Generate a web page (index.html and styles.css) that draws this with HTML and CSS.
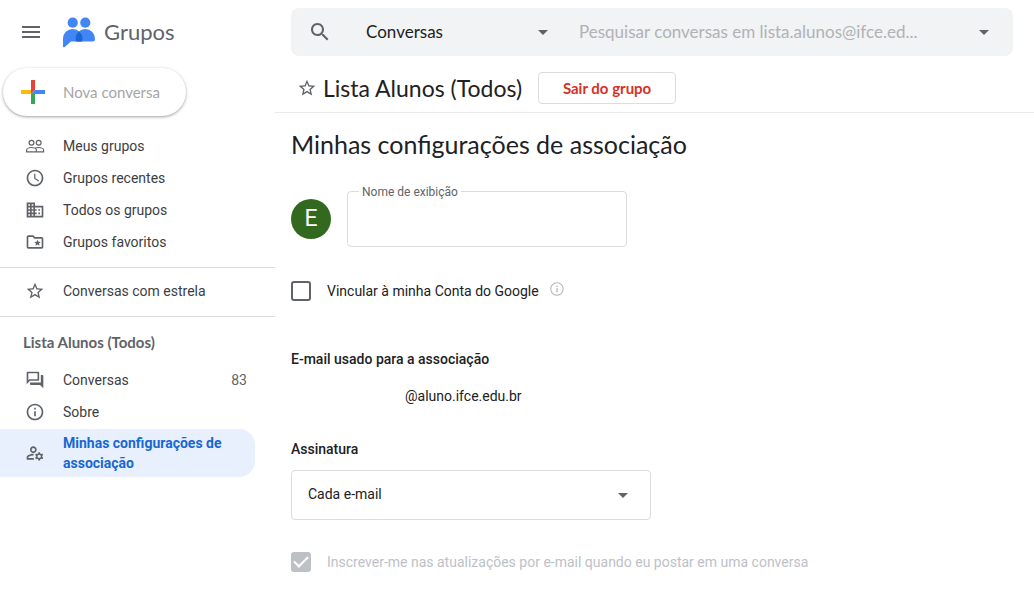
FILE: index.html
```html
<!DOCTYPE html>
<html lang="pt-BR">
<head>
    <meta charset="UTF-8">
    <meta name="viewport" content="width=device-width, initial-scale=1.0">
    <title>Grupos - Minhas configurações de associação</title>
    <link rel="stylesheet" href="styles.css">
</head>
<body>
    <div class="layout">
        <aside class="sidebar">
            <div class="brand">
                <button type="button" class="icon-btn" aria-label="Menu principal">
                    <svg class="icon-lg" viewBox="0 0 24 24"><path d="M3 18h18v-2H3v2zm0-5h18v-2H3v2zm0-7v2h18V6H3z"/></svg>
                </button>
                <a href="#" class="logo">
                    <svg class="logo-mark" viewBox="0 0 34 32">
                        <g fill="#4285f4">
                            <circle cx="10.7" cy="6.7" r="5.1"/>
                            <circle cx="23.3" cy="6.7" r="5.1"/>
                            <path d="M1 30V22.5a9.75 9.5 0 0 1 19.5 0V25.5H9L3 30.7Q1 32 1 30Z"/>
                            <path d="M13.7 25.5V22.5a9.6 9.5 0 0 1 19.2 0v1q0 2-2 2Z"/>
                        </g>
                        <path fill="#1967d2" d="M17 15.5Q20.5 18.5 20.5 22.5Q20.5 25.5 18.5 25.5H15.5Q13.7 25.5 13.7 22.5Q13.7 18.5 17 15.5Z"/>
                    </svg>
                    <span>Grupos</span>
                </a>
            </div>

            <button type="button" class="btn-new" disabled>
                <svg viewBox="0 0 24 24">
                    <path fill="#ea4335" d="M10 0h4v10l-4 4z"/>
                    <path fill="#4285f4" d="M14 10h10v4H10z"/>
                    <path fill="#34a853" d="M10 14h4v10h-4z"/>
                    <path fill="#fbbc04" d="M0 10h10v4H0z"/>
                </svg>
                Nova conversa
            </button>

            <nav>
                <ul class="nav-list">
                    <li><a href="#" class="nav-item">
                        <svg class="outline" viewBox="0 0 20 20"><circle cx="6.5" cy="6.8" r="2.4"/><circle cx="13.7" cy="6.8" r="2.4"/><path d="M1.600 15.900v-2c0-1.400 2.700-2.400 4.900-2.400s4.900 1 4.900 2.400v2zM10.200 12c1-.3 2.300-.5 3.500-.5 2.200 0 4.900 1 4.900 2.400v2h-7.200"/></svg>
                        <span>Meus grupos</span>
                    </a></li>
                    <li><a href="#" class="nav-item">
                        <svg viewBox="0 0 24 24"><path d="M11.99 2C6.47 2 2 6.48 2 12s4.47 10 9.99 10C17.52 22 22 17.52 22 12S17.52 2 11.99 2zM12 20c-4.42 0-8-3.58-8-8s3.58-8 8-8 8 3.58 8 8-3.58 8-8 8zm.5-13H11v6l5.25 3.15.75-1.23-4.5-2.67z"/></svg>
                        <span>Grupos recentes</span>
                    </a></li>
                    <li><a href="#" class="nav-item">
                        <svg viewBox="0 0 24 24"><path d="M12 7V3H2v18h20V7H12zM6 19H4v-2h2v2zm0-4H4v-2h2v2zm0-4H4V9h2v2zm0-4H4V5h2v2zm4 12H8v-2h2v2zm0-4H8v-2h2v2zm0-4H8V9h2v2zm0-4H8V5h2v2zm10 12h-8v-2h2v-2h-2v-2h2v-2h-2V9h8v10zm-2-8h-2v2h2v-2zm0 4h-2v2h2v-2z"/></svg>
                        <span>Todos os grupos</span>
                    </a></li>
                    <li><a href="#" class="nav-item">
                        <svg viewBox="0 0 24 24"><path d="M20 6h-8l-2-2H4c-1.1 0-2 .9-2 2v12c0 1.1.9 2 2 2h16c1.1 0 2-.9 2-2V8c0-1.1-.9-2-2-2zm0 12H4V6h5.17l2 2H20v10z"/><path d="M15 9.2l1.100 2.600 2.800.2-2.100 1.800.7 2.800-2.500-1.500-2.500 1.500.7-2.800-2.100-1.800 2.800-.2z"/></svg>
                        <span>Grupos favoritos</span>
                    </a></li>
                </ul>
                <ul class="nav-list divided">
                    <li><a href="#" class="nav-item">
                        <svg viewBox="0 0 24 24"><path d="M22 9.24l-7.19-.62L12 2 9.19 8.63 2 9.24l5.46 4.73L5.82 21 12 17.27 18.18 21l-1.63-7.03L22 9.24zM12 15.4l-3.76 2.27 1-4.28-3.32-2.88 4.38-.38L12 6.1l1.71 4.04 4.38.38-3.32 2.88 1 4.28L12 15.4z"/></svg>
                        <span>Conversas com estrela</span>
                    </a></li>
                </ul>
                <div class="divided">
                    <h2 class="nav-title">Lista Alunos (Todos)</h2>
                    <ul class="nav-list">
                        <li><a href="#" class="nav-item">
                            <svg viewBox="0 0 24 24"><path d="M15 4v7H5.17L4 12.17V4h11m1-2H3c-.55 0-1 .45-1 1v14l4-4h10c.55 0 1-.45 1-1V3c0-.55-.45-1-1-1zm5 4h-2v9H6v2c0 .55.45 1 1 1h11l4 4V7c0-.55-.45-1-1-1z"/></svg>
                            <span>Conversas</span>
                            <span class="count">83</span>
                        </a></li>
                        <li><a href="#" class="nav-item">
                            <svg viewBox="0 0 24 24"><path d="M11 7h2v2h-2zm0 4h2v6h-2zm1-9C6.48 2 2 6.48 2 12s4.48 10 10 10 10-4.48 10-10S17.52 2 12 2zm0 18c-4.41 0-8-3.59-8-8s3.59-8 8-8 8 3.59 8 8-3.59 8-8 8z"/></svg>
                            <span>Sobre</span>
                        </a></li>
                        <li><a href="#" class="nav-item active" aria-current="page">
                            <svg viewBox="0 0 24 24"><path d="M4 18v-.65c0-.34.16-.66.41-.81C6.1 15.53 8.03 15 10 15c.03 0 .05 0 .08.01.1-.7.3-1.37.59-1.98-.22-.02-.44-.03-.67-.03-2.42 0-4.68.67-6.61 1.82-.88.52-1.39 1.5-1.39 2.53V20h9.26c-.42-.6-.75-1.28-.97-2H4zM10 12c2.21 0 4-1.79 4-4s-1.79-4-4-4-4 1.79-4 4 1.79 4 4 4zm0-6c1.1 0 2 .9 2 2s-.9 2-2 2-2-.9-2-2 .9-2 2-2zM20.75 16c0-.22-.03-.42-.06-.63l1.14-1.01-1-1.73-1.45.49c-.32-.27-.68-.48-1.08-.63L18 11h-2l-.3 1.49c-.4.15-.76.36-1.08.63l-1.45-.49-1 1.73 1.14 1.01c-.03.21-.06.41-.06.63s.03.42.06.63l-1.14 1.01 1 1.73 1.45-.49c.32.27.68.48 1.08.63L16 21h2l.3-1.49c.4-.15.76-.36 1.08-.63l1.45.49 1-1.73-1.14-1.01c.03-.21.06-.41.06-.63zM17 18c-1.1 0-2-.9-2-2s.9-2 2-2 2 .9 2 2-.9 2-2 2z"/></svg>
                            <span>Minhas configurações de associação</span>
                        </a></li>
                    </ul>
                </div>
            </nav>
        </aside>

        <main>
            <form class="search" role="search">
                <button type="submit" class="icon-btn" aria-label="Pesquisar">
                    <svg class="icon-lg" viewBox="0 0 24 24"><path d="M15.5 14h-.79l-.28-.27C15.41 12.59 16 11.11 16 9.5 16 5.91 13.09 3 9.5 3S3 5.91 3 9.5 5.91 16 9.5 16c1.61 0 3.09-.59 4.23-1.57l.27.28v.79l5 4.99L20.49 19l-4.99-5zm-6 0C7.01 14 5 11.99 5 9.5S7.01 5 9.5 5 14 7.01 14 9.5 11.99 14 9.5 14z"/></svg>
                </button>
                <div class="select scope">
                    <select aria-label="Pesquisar em">
                        <option>Conversas</option>
                    </select>
                    <svg class="caret" viewBox="0 0 10 5"><path d="M0 0h10L5 5z"/></svg>
                </div>
                <input type="text" class="search-input" aria-label="Pesquisar conversas" placeholder="Pesquisar conversas em lista.alunos@ifce.ed...">
                <button type="button" class="icon-btn" aria-label="Opções de pesquisa">
                    <svg class="caret" viewBox="0 0 10 5"><path d="M0 0h10L5 5z"/></svg>
                </button>
            </form>

            <header class="group-header">
                <button type="button" class="star-btn" aria-label="Adicionar aos favoritos">
                    <svg viewBox="0 0 24 24"><path d="M22 9.24l-7.19-.62L12 2 9.19 8.63 2 9.24l5.46 4.73L5.82 21 12 17.27 18.18 21l-1.63-7.03L22 9.24zM12 15.4l-3.76 2.27 1-4.28-3.32-2.88 4.38-.38L12 6.1l1.71 4.04 4.38.38-3.32 2.88 1 4.28L12 15.4z"/></svg>
                </button>
                <h1>Lista Alunos (Todos)</h1>
                <button type="button" class="btn-leave">Sair do grupo</button>
            </header>

            <form class="settings">
                <h2>Minhas configurações de associação</h2>

                <div class="profile">
                    <div class="avatar">E</div>
                    <div class="field">
                        <label for="displayName">Nome de exibição</label>
                        <input type="text" id="displayName">
                    </div>
                </div>

                <div class="check-row">
                    <input type="checkbox" id="linkAccount">
                    <label for="linkAccount">Vincular à minha Conta do Google</label>
                    <svg class="info" viewBox="0 0 24 24"><path d="M11 7h2v2h-2zm0 4h2v6h-2zm1-9C6.48 2 2 6.48 2 12s4.48 10 10 10 10-4.48 10-10S17.52 2 12 2zm0 18.5c-4.7 0-8.5-3.8-8.5-8.5s3.8-8.5 8.5-8.5 8.5 3.8 8.5 8.5-3.8 8.5-8.5 8.5z"/></svg>
                </div>

                <h3>E-mail usado para a associação</h3>
                <p class="email">@aluno.ifce.edu.br</p>

                <label class="section-label" for="subscription">Assinatura</label>
                <div class="select subscription">
                    <select id="subscription">
                        <option>Cada e-mail</option>
                    </select>
                    <svg class="caret" viewBox="0 0 10 5"><path d="M0 0h10L5 5z"/></svg>
                </div>

                <div class="check-row">
                    <input type="checkbox" id="autoFollow" checked disabled>
                    <label for="autoFollow">Inscrever-me nas atualizações por e-mail quando eu postar em uma conversa</label>
                </div>
            </form>
        </main>
    </div>
</body>
</html>
```

FILE: styles.css
```css
:root {
    --text: #202124;
    --nav-text: #3c4043;
    --muted: #5f6368;
    --border: #dadce0;
    --disabled: #bdc1c6;
    --active: #1967d2;
    --active-bg: #e8f0fe;
    --display: Lato, sans-serif;
}

* {
    margin: 0;
    padding: 0;
    box-sizing: border-box;
}

body {
    font-family: Roboto, sans-serif;
    font-size: 14px;
    line-height: 20px;
    color: var(--text);
    background: #fff;
}

button,
input,
select {
    font: inherit;
    color: inherit;
    background: none;
    border: none;
}

svg {
    display: block;
    flex-shrink: 0;
    fill: currentColor;
}

.layout {
    display: grid;
    grid-template-columns: 275px 1fr;
    min-height: 100vh;
}

/* Sidebar */
.brand {
    display: flex;
    align-items: center;
    gap: 7px;
    height: 64px;
    padding-left: 7px;
    color: var(--muted);
}

.icon-btn {
    display: flex;
    align-items: center;
    justify-content: center;
    flex-shrink: 0;
    width: 48px;
    height: 48px;
    color: var(--muted);
    cursor: pointer;
}

.icon-lg {
    width: 24px;
    height: 24px;
}

.logo {
    display: flex;
    align-items: center;
    gap: 8px;
    color: var(--muted);
    font-family: var(--display);
    font-size: 22px;
    line-height: 28px;
    text-decoration: none;
}

.logo-mark {
    width: 34px;
    height: 32px;
}

.btn-new {
    display: flex;
    align-items: center;
    gap: 18px;
    height: 48px;
    margin: 4px 0 14px 3px;
    padding: 0 26px 0 18px;
    border-radius: 24px;
    background: #fff;
    box-shadow: 0 1px 2px rgba(60, 64, 67, 0.3), 0 1px 3px 1px rgba(60, 64, 67, 0.15);
    color: #a5a5a5;
    font-family: var(--display);
    font-size: 15px;
}

.btn-new svg {
    width: 24px;
    height: 24px;
}

.nav-list {
    list-style: none;
}

.divided {
    margin-top: 9px;
    padding-top: 7px;
    border-top: 1px solid var(--border);
}

.nav-title {
    padding: 8px 23px 12px;
    color: var(--muted);
    font-family: var(--display);
    font-size: 15px;
    font-weight: 700;
}

.nav-item {
    display: flex;
    align-items: center;
    gap: 18px;
    min-height: 32px;
    margin-right: 20px;
    padding: 4px 8px 4px 25px;
    color: var(--nav-text);
    text-decoration: none;
}

.nav-item svg {
    width: 20px;
    height: 20px;
    color: var(--muted);
}

.nav-item .outline {
    fill: none;
    stroke: currentColor;
    stroke-width: 1.2;
}

.nav-item .count {
    margin-left: auto;
    color: var(--muted);
}

.nav-item.active {
    margin-top: 1px;
    border-radius: 0 16px 16px 0;
    background: var(--active-bg);
    color: var(--active);
    font-weight: 700;
}

/* Search */
.search {
    display: flex;
    align-items: center;
    height: 48px;
    margin: 8px 21px 0 16px;
    padding: 0 5px;
    border-radius: 8px;
    background: #f1f3f4;
    font-family: var(--display);
    font-size: 17px;
}

.select {
    position: relative;
}

.select select {
    width: 100%;
    height: 100%;
    appearance: none;
    cursor: pointer;
}

.caret {
    width: 10px;
    height: 5px;
    color: var(--muted);
}

.select .caret {
    position: absolute;
    top: calc(50% - 2px);
    right: 23px;
    pointer-events: none;
}

.scope {
    flex-shrink: 0;
    width: 208px;
    height: 40px;
    margin-left: 8px;
}

.scope select {
    padding-left: 14px;
}

.scope .caret {
    right: 12px;
}

.search-input {
    flex: 1;
    min-width: 0;
    margin-left: 19px;
    outline: none;
}

.search-input::placeholder {
    color: #b0b2b4;
}

/* Group header */
.group-header {
    display: flex;
    align-items: center;
    height: 57px;
    padding: 8px 16px 0 22px;
    border-bottom: 1px solid #e8eaed;
}

.star-btn svg {
    width: 20px;
    height: 20px;
    color: var(--muted);
}

h1,
.settings h2 {
    font-family: var(--display);
    font-weight: 400;
    line-height: 32px;
}

.group-header h1 {
    margin: 0 16px 0 6px;
    font-size: 23px;
}

.settings h2 {
    font-size: 25px;
}

.btn-leave {
    width: 138px;
    height: 32px;
    border: 1px solid var(--border);
    border-radius: 4px;
    color: #d93025;
    font-family: var(--display);
    font-size: 15px;
    font-weight: 700;
    cursor: pointer;
}

/* Membership settings */
.settings {
    padding: 15px 16px 28px;
}

.profile {
    display: flex;
    align-items: center;
    gap: 16px;
    margin: 31px 0 34px;
}

.avatar {
    display: flex;
    align-items: center;
    justify-content: center;
    width: 40px;
    height: 40px;
    border-radius: 50%;
    background: #33691e;
    color: #fff;
    font-size: 23px;
}

.field {
    position: relative;
    width: 280px;
}

.field input {
    display: block;
    width: 100%;
    height: 56px;
    padding: 0 15px;
    border: 1px solid var(--border);
    border-radius: 4px;
    font-size: 16px;
}

.field label {
    position: absolute;
    top: -7px;
    left: 12px;
    padding: 0 3px;
    background: #fff;
    color: var(--muted);
    font-size: 12px;
    line-height: 16px;
}

.check-row {
    display: flex;
    align-items: center;
}

.check-row label {
    margin-left: 16px;
}

.check-row input {
    display: grid;
    place-items: center;
    flex-shrink: 0;
    width: 20px;
    height: 20px;
    border: 2px solid var(--muted);
    border-radius: 3px;
    appearance: none;
}

.check-row input:checked::after {
    content: "";
    width: 12px;
    height: 6px;
    margin-bottom: 4px;
    border: solid #fff;
    border-width: 0 0 2px 2px;
    transform: rotate(-45deg);
}

.check-row input:disabled {
    border-color: var(--disabled);
    background: var(--disabled);
}

.check-row input:disabled + label {
    color: var(--disabled);
}

.info {
    width: 16px;
    height: 16px;
    margin: 0 0 4px 10px;
    color: #b0b2b4;
}

.settings h3,
.section-label {
    display: block;
    font-size: 14px;
    font-weight: 500;
}

.settings h3 {
    margin-top: 48px;
}

.email {
    margin: 17px 0 33px;
    padding-left: 114px;
}

.subscription {
    width: 360px;
    max-width: 100%;
    height: 50px;
    margin: 11px 0 32px;
}

.subscription select {
    padding: 0 40px 2px 16px;
    border: 1px solid var(--border);
    border-radius: 4px;
}
```
